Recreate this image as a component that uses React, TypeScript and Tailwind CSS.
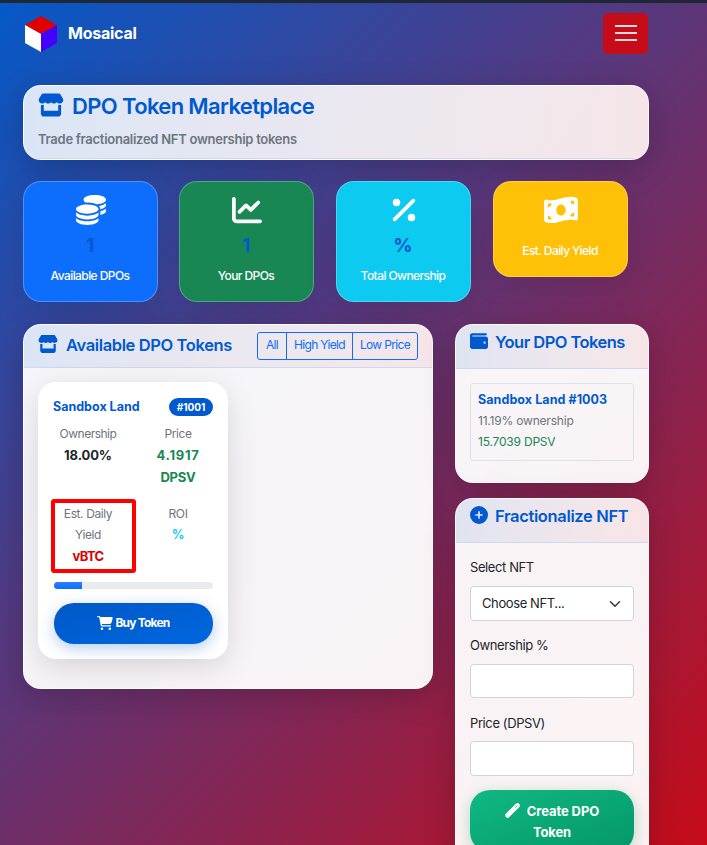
import type { ReactNode } from "react";
import {
  FaCartShopping,
  FaChartLine,
  FaCirclePlus,
  FaCoins,
  FaMoneyBillWave,
  FaPercent,
  FaStore,
  FaWallet,
} from "react-icons/fa6";

const panel =
  "rounded-[18px] border border-white/70 bg-white/95 shadow-[0_8px_32px_rgba(0,0,0,0.2)] overflow-hidden";
const panelHead =
  "flex border-b border-[#cfd8ec] bg-linear-to-r from-[#0060c8]/11 to-[#dc1010]/7 px-[14px] text-[#0059cf]";

function Stat({ icon, value, label, tone }: { icon: ReactNode; value?: string; label: string; tone: string }) {
  return (
    <div
      className={`flex w-[135px] flex-col items-center rounded-[18px] border border-white/25 pt-[13px] text-white shadow-[0_8px_32px_rgba(0,0,0,0.1)] ${tone}`}
    >
      <div className="flex h-[30px] items-center text-[30px]">{icon}</div>
      {value && <div className="mt-[9px] h-[24px] pr-px text-[19px] leading-[24px] font-bold text-[#0059cf]">{value}</div>}
      <div className={`pr-px text-[12px] leading-[18px] font-medium tracking-[-0.58px] ${value ? "mt-[9px]" : "mt-[17px]"}`}>
        {label}
      </div>
    </div>
  );
}

function Logo() {
  return (
    <svg width="32" height="36" viewBox="0 0 32 36">
      <path d="M16 0L32 9L16 18L0 9Z" fill="#e00000" />
      <path d="M0 9L16 18V36L0 27Z" fill="#fff" />
      <path d="M32 9L16 18V36L32 27Z" fill="#4300ff" />
    </svg>
  );
}

function Wand() {
  return (
    <svg className="mr-[7px] -mt-[4px] inline" width="15" height="15" viewBox="0 0 15 15" strokeLinecap="round">
      <path d="M2.6 12.4L12.4 2.6" stroke="#fff" strokeWidth="4.8" />
      <path d="M10.6 4.4L12.2 2.8" stroke="#0ba673" strokeWidth="0.8" />
    </svg>
  );
}

function Available() {
  return (
    <section className={`${panel} h-[365px] w-[410px]`}>
      <header className={`${panelHead} h-[43px] items-center`}>
        <FaStore className="-mt-[5px] mr-[8px] h-[18px] w-[20px]" />
        <h2 className="-mt-[2px] text-[16.5px] leading-6 font-semibold tracking-[-0.38px] whitespace-nowrap">Available DPO Tokens</h2>
        <div className="ml-auto flex h-[28px] divide-x divide-[#0d6efd] rounded-[3px] border border-[#0d6efd] text-[12px] leading-[24px] tracking-[-0.65px] text-[#0d6efd]">
          <button className="w-[29px] pb-[2px]">All</button>
          <button className="w-[66px] pb-[2px]">High Yield</button>
          <button className="w-[64px] pb-[2px]">Low Price</button>
        </div>
      </header>
      <div className="px-[14px] pt-[14px]">
        <article className="h-[277px] w-[190px] rounded-[18px] bg-white px-[15px] pt-[15px] shadow-[0_8px_30px_rgba(0,0,0,0.13)]">
          <div className="flex h-[19px] items-center justify-between">
            <h3 className="pt-[2px] text-[12.5px] font-bold text-[#0059cf]">Sandbox Land</h3>
            <span className="h-[18px] w-[44px] rounded-full bg-[#0059cf] text-center text-[10px] leading-[18px] font-bold text-white">#1001</span>
          </div>
          <div className="mt-[7px] flex text-center text-[12px] leading-[21px] text-[#6c757d]">
            <div className="w-[70px]">
              <div className="tracking-[-0.5px]">Ownership</div>
              <div className="text-[13px] leading-[22px] font-bold tracking-[-0.1px] text-[#212529]">18.00%</div>
            </div>
            <div className="ml-[20px] w-[70px]">
              <div className="tracking-[-0.4px]">Price</div>
              <div className="text-[13px] leading-[22px] font-bold text-[#198754]">
                <span className="tracking-[0.7px]">4.1917</span>
                <br />
                <span className="tracking-[-0.2px]">DPSV</span>
              </div>
            </div>
          </div>
          <div className="-ml-[2px] mt-[11px] flex text-center text-[12px] leading-[21px] text-[#6c757d]">
            <div className="h-[74px] w-[85px] rounded-[3px] border-4 border-[#ff0000] pr-[11px]">
              <div className="tracking-[-0.4px]">Est. Daily<br />Yield</div>
              <div className="text-[13px] leading-[22px] font-bold tracking-[-0.6px] text-[#dc0000]">vBTC</div>
            </div>
            <div className="ml-[7px] w-[70px] pt-[4px]">
              <div className="tracking-[-0.4px]">ROI</div>
              <div className="text-[12.5px] font-bold text-[#0dcaf0]">%</div>
            </div>
          </div>
          <div className="mt-[9px] ml-px h-[7px] w-[159px] overflow-hidden rounded-full bg-[#e9ecef]">
            <div className="h-full w-[28px] bg-linear-to-b from-[#2b7dff] to-[#0d6efd]" />
          </div>
          <button className="mt-[14px] ml-px flex h-[41px] w-[159px] items-center justify-center gap-[2px] rounded-[20px] bg-linear-to-br from-[#0058c7] to-[#0067df] pb-[2px] text-[12px] font-bold tracking-[-0.8px] text-white shadow-[0_4px_15px_rgba(0,86,200,0.3)]">
            <FaCartShopping className="h-[14px] w-[16px]" />
            Buy Token
          </button>
        </article>
      </div>
    </section>
  );
}

function YourTokens() {
  return (
    <section className={`${panel} h-[159px]`}>
      <header className={`${panelHead} h-[44px] pt-[6px]`}>
        <FaWallet className="mt-px mr-[7px] h-[18px] w-[18px]" />
        <h2 className="text-[16.5px] leading-[22px] font-semibold tracking-[-0.54px] whitespace-nowrap">Your DPO Tokens</h2>
      </header>
      <div className="mx-[14px] mt-[14px] h-[78px] rounded-[3px] border border-[#dee2e6] px-[7px] pt-[5px] text-[12px] leading-[21px] tracking-[-0.2px]">
        <h3 className="text-[12.5px] font-bold tracking-[0.07px] text-[#0059cf]">Sandbox Land #1003</h3>
        <p className="text-[#6c757d]">11.19% ownership</p>
        <p className="text-[#198754]">15.7039 DPSV</p>
      </div>
    </section>
  );
}

function Fractionalize() {
  return (
    <section className={`${panel} h-[420px]`}>
      <header className={`${panelHead} h-[44px] pt-[6px]`}>
        <FaCirclePlus className="mt-px mr-[7px] h-[18px] w-[18px]" />
        <h2 className="text-[16.5px] leading-[22px] font-semibold tracking-[-0.35px] whitespace-nowrap">Fractionalize NFT</h2>
      </header>
      <form className="flex flex-col px-[14px] pt-[14px] text-[13px] leading-[21px] tracking-[-0.4px] text-[#212529]">
        <label>Select NFT</label>
        <div className="mt-[8px] flex h-[35px] items-center justify-between rounded-[4px] border border-[#ced4da] bg-white pr-[12px] pl-[11px]">
          <span>Choose NFT...</span>
          <svg width="12" height="12" viewBox="0 0 16 16" fill="none" stroke="#343a40" strokeWidth="2" strokeLinecap="round" strokeLinejoin="round">
            <path d="m2 5 6 6 6-6" />
          </svg>
        </div>
        <label className="mt-[14px]">Ownership %</label>
        <input className="mt-[8px] h-[34px] rounded-[4px] border border-[#ced4da] bg-white" />
        <label className="mt-[15px]">Price (DPSV)</label>
        <input className="mt-[7px] h-[35px] rounded-[4px] border border-[#ced4da] bg-white" />
        <button className="mt-[14px] h-[62px] rounded-[20px] bg-linear-to-br from-[#10b981] to-[#059669] px-[30px] pt-[2px] text-[13px] leading-[21px] font-bold tracking-[-0.1px] text-white shadow-[0_4px_15px_rgba(16,150,110,0.3)]">
          <Wand />
          Create DPO Token
        </button>
      </form>
    </section>
  );
}

export default function App() {
  return (
    <div className="h-[845px] w-[707px] overflow-hidden border-t-[3px] border-[#1f2735] bg-[linear-gradient(135deg,#0559c8_0%,#c70b18_100%)] font-[Inter,'Liberation_Sans',sans-serif]">
      <nav className="flex h-[61px] items-center pr-[59px] pl-[25px]">
        <Logo />
        <span className="-mt-[2px] ml-[11px] text-[16px] font-bold tracking-[-0.25px] text-white">Mosaical</span>
        <button className="ml-auto flex h-[41px] w-[45px] flex-col items-center justify-center gap-[5px] rounded-[5px] bg-[#c70c19] pb-px">
          <i className="h-[2px] w-[22px] bg-white/85" />
          <i className="h-[2px] w-[22px] bg-white/85" />
          <i className="h-[2px] w-[22px] bg-white/85" />
        </button>
      </nav>
      <main className="w-[649px] pt-[21px] pl-[23px]">
        <section className={`${panel} h-[75px]`}>
          <div className="h-full border-b border-[#cfd8ec] bg-linear-to-r from-[#0060c8]/11 to-[#dc1010]/7 px-[14px] pt-[7px]">
            <h1 className="flex h-[26px] items-center text-[22px] font-semibold tracking-[-0.64px] text-[#0059cf]">
              <FaStore className="-mt-[3px] mr-[8px] h-[24px] w-[26px]" />
              DPO Token Marketplace
            </h1>
            <p className="mt-[10px] text-[13px] leading-[20px] font-semibold tracking-[-0.27px] text-[#6c757d]">Trade fractionalized NFT ownership tokens</p>
          </div>
        </section>
        <div className="mt-[21px] flex items-start gap-[22px]">
          <Stat icon={<FaCoins />} value="1" label="Available DPOs" tone="-mr-px h-[121px] bg-[#0d6efd]" />
          <Stat icon={<FaChartLine />} value="1" label="Your DPOs" tone="h-[121px] bg-[#198754]" />
          <Stat icon={<FaPercent />} value="%" label="Total Ownership" tone="h-[121px] bg-[#0dcaf0]" />
          <Stat icon={<FaMoneyBillWave className="h-[30px] w-[34px]" />} label="Est. Daily Yield" tone="h-[96px] bg-[#ffc107]" />
        </div>
        <div className="mt-[22px] flex items-start gap-[22px]">
          <Available />
          <aside className="flex w-[194px] flex-col gap-[15px]">
            <YourTokens />
            <Fractionalize />
          </aside>
        </div>
      </main>
    </div>
  );
}
